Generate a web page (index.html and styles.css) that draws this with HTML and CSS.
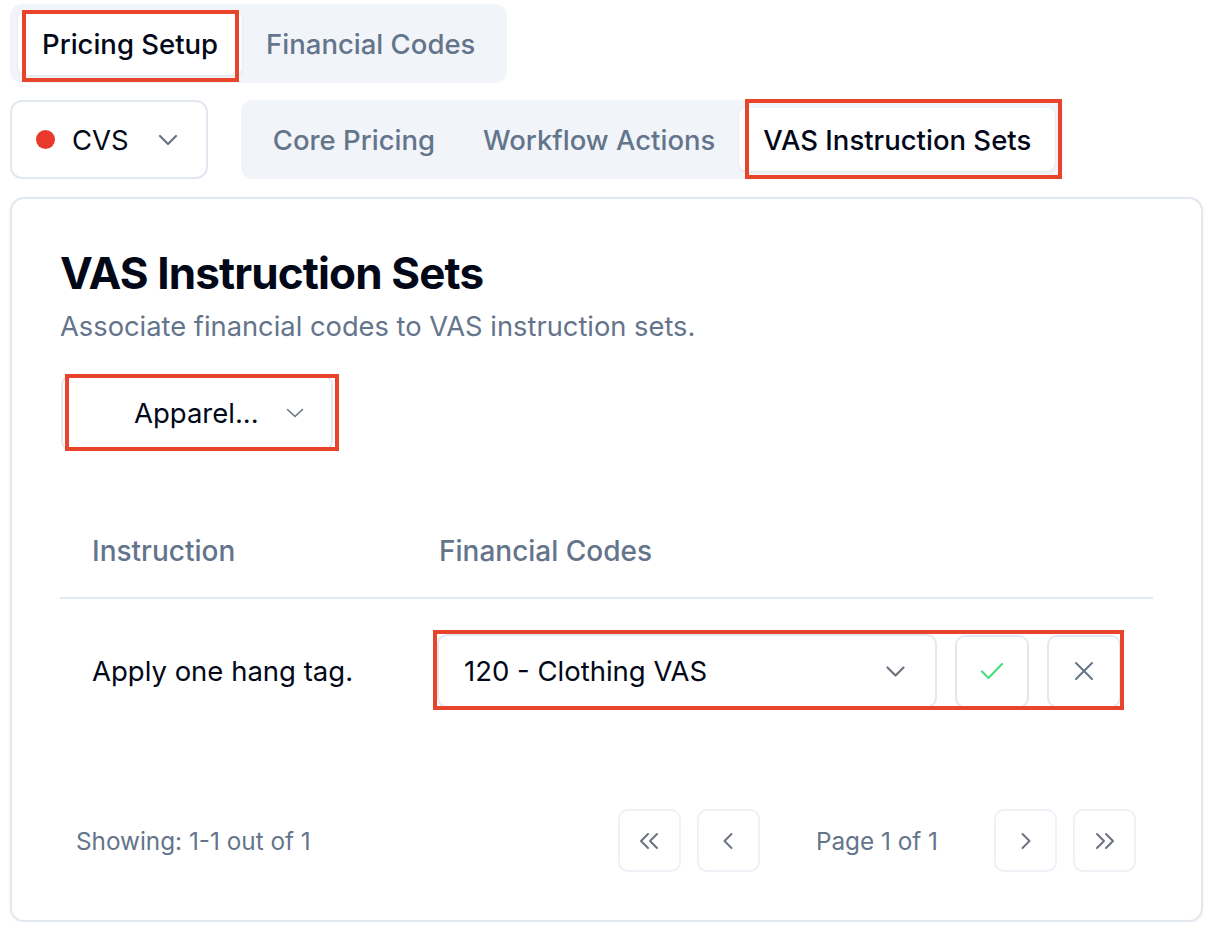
FILE: index.html
```html
<!DOCTYPE html>
<html lang="en">

<head>
    <meta charset="UTF-8">
    <meta name="viewport" content="width=device-width, initial-scale=1.0">
    <title>Pricing Setup - VAS Instruction Sets</title>
    <link rel="stylesheet" href="styles.css">
</head>

<body>
    <div class="page">
        <div class="tabs top-tabs">
            <button class="tab active">Pricing Setup<span class="mark mark-pricing"></span></button>
            <button class="tab">Financial Codes</button>
        </div>

        <div class="toolbar">
            <button class="client-select">
                <span class="dot"></span>
                <span>CVS</span>
                <svg class="chevron" width="20" height="12" viewBox="0 0 20 12">
                    <path d="M2 2 10 10 18 2" />
                </svg>
            </button>
            <div class="tabs sub-tabs">
                <button class="tab">Core Pricing</button>
                <button class="tab">Workflow Actions</button>
                <button class="tab active">VAS Instruction Sets<span class="mark mark-vas"></span></button>
            </div>
        </div>

        <section class="card">
            <h1>VAS Instruction Sets</h1>
            <p class="subtitle">Associate financial codes to VAS instruction sets.</p>

            <button class="set-select">
                <span>Apparel...</span>
                <svg class="chevron thin" width="18" height="10" viewBox="0 0 18 10">
                    <path d="M1.5 1.5 9 8.5 16.5 1.5" />
                </svg>
                <span class="mark mark-set"></span>
            </button>

            <table class="codes-table">
                <thead>
                    <tr>
                        <th class="col-instruction">Instruction</th>
                        <th>Financial Codes</th>
                    </tr>
                </thead>
                <tbody>
                    <tr>
                        <td>Apply one hang tag.</td>
                        <td class="edit-cell">
                            <div class="code-edit">
                                <button class="code-select">
                                    <span>120 - Clothing VAS</span>
                                    <svg class="chevron" width="19" height="11" viewBox="0 0 19 11">
                                        <path d="M1.5 1.5 9.5 9.5 17.5 1.5" />
                                    </svg>
                                </button>
                                <button class="icon-btn save">
                                    <svg width="24" height="18" viewBox="0 0 24 18">
                                        <path d="M2 9.5 8.5 16 22 2" />
                                    </svg>
                                </button>
                                <button class="icon-btn cancel">
                                    <svg width="20" height="20" viewBox="0 0 20 20">
                                        <path d="M2 2 18 18M18 2 2 18" />
                                    </svg>
                                </button>
                                <span class="mark mark-row"></span>
                            </div>
                        </td>
                    </tr>
                </tbody>
            </table>

            <div class="pager">
                <span class="showing">Showing: 1-1 out of 1</span>
                <div class="pager-controls">
                    <button class="page-btn">
                        <svg width="22" height="18" viewBox="0 0 22 18">
                            <path d="M10 2 3 9 10 16M19 2 12 9 19 16" />
                        </svg>
                    </button>
                    <button class="page-btn">
                        <svg width="12" height="18" viewBox="0 0 12 18">
                            <path d="M9.5 2 2.5 9 9.5 16" />
                        </svg>
                    </button>
                    <span class="page-label">Page 1 of 1</span>
                    <button class="page-btn">
                        <svg width="12" height="18" viewBox="0 0 12 18">
                            <path d="M2.5 2 9.5 9 2.5 16" />
                        </svg>
                    </button>
                    <button class="page-btn">
                        <svg width="22" height="18" viewBox="0 0 22 18">
                            <path d="M3 2 10 9 3 16M12 2 19 9 12 16" />
                        </svg>
                    </button>
                </div>
            </div>
        </section>
    </div>
</body>

</html>
```

FILE: styles.css
```css
:root {
    --text-color: #020817;
    --muted-color: #64748b;
    --icon-color: #6b7280;
    --border-color: #e2e8f0;
    --soft-border: #eef1f5;
    --tabs-bg: #f1f5f9;
    --mark-color: #e8442c;
}

* {
    margin: 0;
    padding: 0;
    box-sizing: border-box;
}

body {
    font-family: 'Inter', 'Noto Sans', sans-serif;
    color: var(--text-color);
    background: #fff;
}

button {
    font: inherit;
    color: inherit;
    background: none;
    border: none;
    cursor: pointer;
}

svg {
    display: block;
    fill: none;
    stroke: currentColor;
    stroke-linecap: round;
    stroke-linejoin: round;
}

.page {
    padding: 4px 15px 0 10px;
}

/* tab strips */
.tabs {
    display: inline-flex;
    align-items: center;
    background: var(--tabs-bg);
    border-radius: 12px;
    padding: 8px;
}

.tab {
    position: relative;
    height: 63px;
    padding: 0 24px;
    font-size: 27.5px;
    font-weight: 500;
    color: var(--muted-color);
    border-radius: 8px;
    white-space: nowrap;
}

.tab.active {
    background: #fff;
    color: var(--text-color);
    box-shadow: 0 1px 3px rgba(15, 23, 42, 0.08);
}

/* red highlight boxes */
.mark {
    position: absolute;
    border: 4px solid var(--mark-color);
    pointer-events: none;
}

.mark-pricing {
    inset: -2px 3px -7px 4px;
}

.mark-vas {
    inset: -9px -7px -8px 6px;
}

.mark-set {
    inset: -3px -8px -2px 2px;
}

.mark-row {
    inset: -4px -3px -2px -4px;
}

.toolbar {
    display: flex;
    gap: 33px;
    margin-top: 17px;
}

.client-select {
    display: flex;
    align-items: center;
    height: 79px;
    padding: 0 28px 0 24px;
    border: 2px solid var(--border-color);
    border-radius: 12px;
    font-size: 27.5px;
}

.dot {
    width: 19px;
    height: 19px;
    border-radius: 50%;
    background: #e8392b;
    margin-right: 17px;
}

.chevron {
    color: var(--icon-color);
    stroke-width: 2.2;
}

.chevron.thin {
    stroke-width: 1.6;
}

.client-select .chevron {
    margin-left: 29px;
}

/* main card */
.card {
    margin-top: 18px;
    border: 2px solid var(--border-color);
    border-radius: 14px;
    padding: 50px 48px 48px;
    box-shadow: 0 1px 3px rgba(15, 23, 42, 0.06);
}

h1 {
    font-size: 44px;
    font-weight: 700;
    letter-spacing: -0.02em;
    line-height: 1.1;
}

.subtitle {
    margin-top: 10px;
    font-size: 27.3px;
    line-height: 1.5;
    color: var(--muted-color);
}

.set-select {
    position: relative;
    display: flex;
    align-items: center;
    gap: 27px;
    width: 272px;
    height: 76px;
    margin-top: 27px;
    margin-left: 1px;
    padding-left: 71px;
    border: 2px solid var(--border-color);
    border-radius: 10px;
    font-size: 27.5px;
}

/* table */
.codes-table {
    width: 100%;
    border-collapse: collapse;
    margin-top: 54px;
}

.codes-table th {
    height: 93px;
    padding-left: 32px;
    text-align: left;
    font-size: 28px;
    font-weight: 500;
    color: var(--muted-color);
    border-bottom: 2px solid var(--border-color);
}

.col-instruction {
    width: 347px;
}

.codes-table td {
    height: 145px;
    padding-left: 32px;
    font-size: 27.5px;
    vertical-align: middle;
}

.codes-table td.edit-cell {
    padding-left: 30px;
}

.code-edit {
    position: relative;
    display: inline-flex;
    align-items: center;
    gap: 18px;
}

.code-select {
    display: flex;
    align-items: center;
    justify-content: space-between;
    width: 500px;
    height: 74px;
    padding: 0 30px 0 25px;
    border: 2px solid var(--border-color);
    border-radius: 10px;
    font-size: 27.5px;
}

.icon-btn {
    display: flex;
    align-items: center;
    justify-content: center;
    width: 74px;
    height: 73px;
    border: 2px solid var(--border-color);
    border-radius: 10px;
}

.icon-btn.save {
    color: #4ade80;
    stroke-width: 2.2;
}

.icon-btn.cancel {
    color: var(--muted-color);
    stroke-width: 2;
}

/* pagination */
.pager {
    display: flex;
    align-items: center;
    justify-content: space-between;
    margin-top: 66px;
    padding: 0 17px 0 16px;
}

.showing,
.page-label {
    font-size: 24.3px;
    color: var(--muted-color);
}

.pager-controls {
    display: flex;
    align-items: center;
    gap: 16px;
}

.page-label {
    margin: 0 40px;
}

.page-btn {
    display: flex;
    align-items: center;
    justify-content: center;
    width: 63px;
    height: 63px;
    border: 2px solid var(--soft-border);
    border-radius: 10px;
    color: var(--icon-color);
    stroke-width: 2;
}
```
